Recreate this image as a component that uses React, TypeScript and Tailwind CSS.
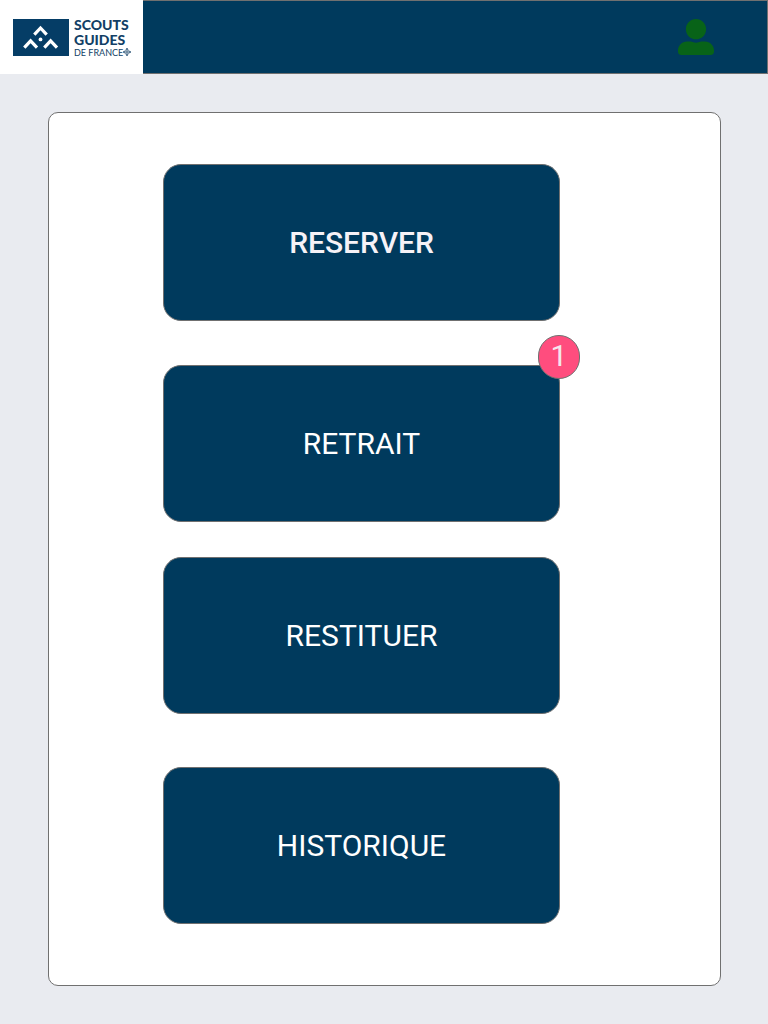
type MenuItem = {
  label: string;
  spacing: string;
  weight: string;
  badge?: number;
};

const items: MenuItem[] = [
  { label: "RESERVER", spacing: "", weight: "font-medium text-[#f6f2f7]" },
  { label: "RETRAIT", spacing: "mt-11", weight: "font-normal text-white", badge: 1 },
  { label: "RESTITUER", spacing: "mt-[35px]", weight: "font-normal text-white" },
  { label: "HISTORIQUE", spacing: "mt-[53px]", weight: "font-normal text-white" },
];

function Logo() {
  return (
    <a
      href="#"
      aria-label="Scouts Guides de France"
      className="flex w-[143px] shrink-0 items-center gap-[5px] bg-white pl-[13px] text-[#123f66]"
    >
      <svg viewBox="0 0 56 37" className="h-[37px] w-14 shrink-0" aria-hidden="true">
        <rect width="56" height="37" fill="#053d66" />
        <g fill="none" stroke="#fff" strokeWidth="3.2">
          <path d="M21.3 15.6 27.5 9 33.7 15.6" />
          <path d="M11.3 28.6 17.6 21.8 24 28.6" />
          <path d="M31.3 28.6 37.6 21.8 44 28.6" />
        </g>
        <circle cx="27.5" cy="20.4" r="1.9" fill="#fff" />
      </svg>
      <span className="flex flex-col">
        <span className="text-[14px] leading-[15px] font-black">SCOUTS</span>
        <span className="text-[14px] leading-[15px] font-black">GUIDES</span>
        <span className="flex items-center text-[9px] leading-[11px] whitespace-nowrap">
          DE FRANCE
          <svg viewBox="0 0 8 8" className="size-2" fill="none" stroke="currentColor" aria-hidden="true">
            <circle cx="4" cy="4" r="2.4" strokeWidth="0.6" />
            <path d="M4 0.5v7M0.5 4h7M3 0.7h2M3 7.3h2M0.7 3v2M7.3 3v2" strokeWidth="0.7" />
          </svg>
        </span>
      </span>
    </a>
  );
}

export default function App() {
  return (
    <div className="min-h-screen bg-[#e9ebf0] font-['Roboto',sans-serif]">
      <header className="flex h-[74px] font-['Lato',sans-serif]">
        <Logo />
        <div className="flex flex-1 items-center justify-end border border-l-0 border-[#707070] bg-[#003a5d] pr-[53px]">
          <button type="button" aria-label="Mon compte" className="text-[#086318]">
            <svg viewBox="0 0 512 512" className="size-9" fill="currentColor" aria-hidden="true">
              <path d="M256 288c79.5 0 144-64.5 144-144S335.5 0 256 0 112 64.5 112 144s64.5 144 144 144zm128 32h-55.1c-22.2 10.2-46.9 16-72.9 16s-50.6-5.8-72.9-16H128C57.3 320 0 377.3 0 448v16c0 26.5 21.5 48 48 48h416c26.5 0 48-21.5 48-48v-16c0-70.7-57.3-128-128-128z" />
            </svg>
          </button>
        </div>
      </header>
      <main className="py-[38px] pr-[47px] pl-12">
        <nav className="flex flex-col items-center rounded-[10px] border border-[#707070] bg-white px-6 pt-[51px] pb-[61px] md:pr-[70px]">
          {items.map((item) => (
            <div key={item.label} className={`relative w-full max-w-[397px] ${item.spacing}`}>
              <button
                type="button"
                className={`h-[157px] w-full rounded-[18px] border border-[#707070] bg-[#003a5d] pt-px text-[30px] leading-10 ${item.weight}`}
              >
                {item.label}
              </button>
              {item.badge !== undefined && (
                <span className="absolute -top-[30px] -right-5 flex h-11 w-[42px] items-center justify-center rounded-full border border-[#707070] bg-[#ff4d7e] pb-[2px] text-[30px] leading-10 text-[#f5e6ee]">
                  {item.badge}
                </span>
              )}
            </div>
          ))}
        </nav>
      </main>
    </div>
  );
}
